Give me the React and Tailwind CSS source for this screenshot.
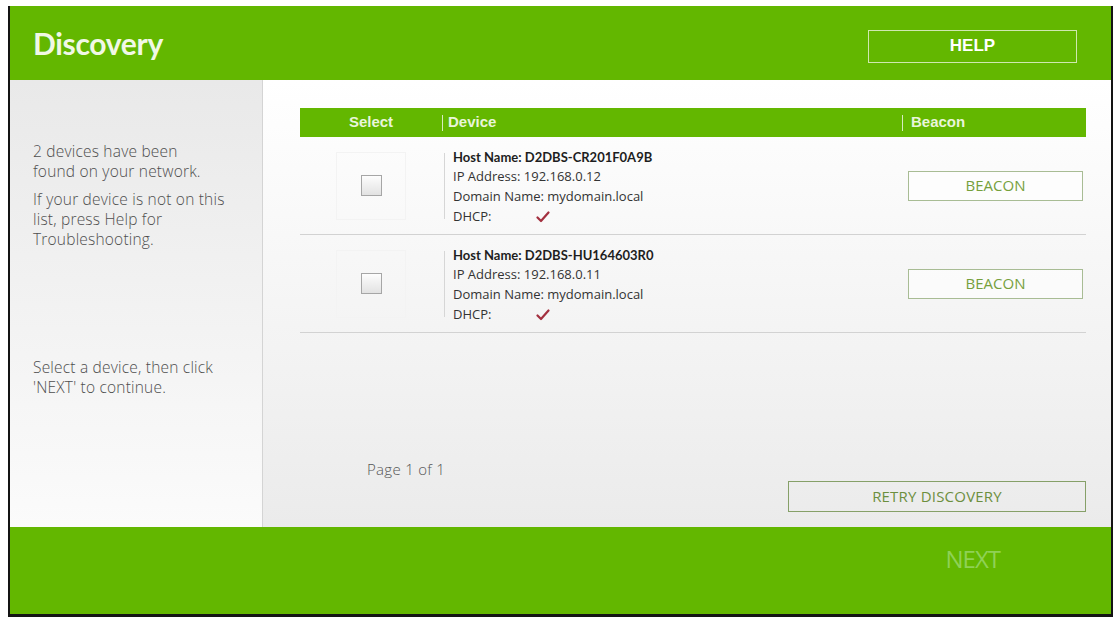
import React from 'react';

const devices = [
  { host: 'D2DBS-CR201F0A9B', ip: '192.168.0.12', domain: 'mydomain.local', dhcp: true },
  { host: 'D2DBS-HU164603R0', ip: '192.168.0.11', domain: 'mydomain.local', dhcp: true },
];

const Check = () => (
  <svg width="14" height="12" viewBox="0 0 14 12" className="inline-block">
    <path d="M1.5 6.5 L5 10 L12.5 1.5" fill="none" stroke="#a3303f" strokeWidth="2.2" strokeLinecap="round" strokeLinejoin="round" />
  </svg>
);

const DeviceRow = ({ device }) => (
  <div className="flex h-[98px] items-center border-b border-[#d2d2d2]">
    <div className="w-[142px] flex justify-center">
      <div className="w-[70px] h-[68px] border border-[#f3f3f3] flex items-center justify-center">
        <div className="w-[21px] h-[21px] border border-[#a6a6a6] bg-gradient-to-b from-[#fdfdfd] to-[#e2e2e2]"></div>
      </div>
    </div>
    <div className="w-[460px] flex items-center">
      <div className="w-px h-[66px] bg-[#d6d6d6] ml-[2px] mr-[8px]"></div>
      <div className="text-[13px] leading-[19.7px] text-[#333] pt-[3px]" style={{ fontFamily: '"Open Sans", sans-serif' }}>
        <p className="font-bold text-[#1e1e1e]" style={{ fontFamily: 'Lato, sans-serif' }}>Host Name: {device.host}</p>
        <p>IP Address: {device.ip}</p>
        <p>Domain Name: {device.domain}</p>
        <p className="flex items-center">
          <span className="w-[83px]">DHCP:</span>
          {device.dhcp && <Check />}
        </p>
      </div>
    </div>
    <div className="flex-1">
      <button className="ml-[6px] w-[175px] h-[30px] border border-[#a8bc94] bg-white/60 text-[15px] text-[#76a03c]">
        BEACON
      </button>
    </div>
  </div>
);

const App = () => {
  return (
    <div className="w-[1115px] h-[623px] bg-white pt-[6px] pl-[8px]" style={{ fontFamily: '"Open Sans", Lato, sans-serif' }}>
      <div className="w-[1105px] h-[611px] flex flex-col border-l-2 border-r-2 border-b-[3px] border-[#141414]">
        {/* header */}
        <div className="h-[74px] bg-[#63b700] flex items-center justify-between pl-[23px] pr-[34px]">
          <h1 className="text-[30px] font-bold text-[#f1f8e6] tracking-[-0.3px] pt-[1px]" style={{ fontFamily: 'Lato, sans-serif' }}>
            Discovery
          </h1>
          <button
            className="mt-[6px] w-[209px] h-[33px] border border-[#cfe8b0] text-[17px] font-bold text-white"
            style={{ fontFamily: '"Liberation Sans", Arial, sans-serif' }}
          >
            HELP
          </button>
        </div>

        {/* body */}
        <div className="flex-1 flex min-h-0">
          <div className="w-[253px] border-r border-[#d4d4d4] bg-gradient-to-b from-[#e9e9e9] to-[#fbfbfb] pl-[23px] pt-[61px] text-[15.5px] leading-[20px] font-light text-[#4e4e4e] tracking-[0.2px]">
            <p>2 devices have been<br />found on your network.</p>
            <p className="mt-[8px]">If your device is not on this<br />list, press Help for<br />Troubleshooting.</p>
            <p className="mt-[108px]">Select a device, then click<br />'NEXT' to continue.</p>
          </div>

          <div className="flex-1 flex flex-col bg-gradient-to-b from-white to-[#ebebeb] pl-[37px] pr-[25px] pt-[28px] pb-[15px]">
            <div
              className="h-[29px] bg-[#63b700] flex items-center text-[15px] font-bold text-[#e9f5da]"
              style={{ fontFamily: '"Liberation Sans", Arial, sans-serif' }}
            >
              <div className="w-[142px] text-center">Select</div>
              <div className="w-[460px] flex items-center">
                <span className="w-px h-[16px] bg-[#d6ecbf] mr-[5px]"></span>
                Device
              </div>
              <div className="flex-1 flex items-center">
                <span className="w-px h-[16px] bg-[#d6ecbf] mr-[8px]"></span>
                Beacon
              </div>
            </div>

            {devices.map((d) => (
              <DeviceRow key={d.host} device={d} />
            ))}

            <div className="flex-1"></div>

            <div className="flex justify-between items-start">
              <p className="pl-[67px] text-[15px] leading-[20px] font-light text-[#555] tracking-[0.3px]">Page 1 of 1</p>
              <button className="mt-[22px] w-[298px] h-[31px] border border-[#86a068] text-[15px] text-[#6c8f3e] tracking-[0.2px]">
                RETRY DISCOVERY
              </button>
            </div>
          </div>
        </div>

        {/* footer */}
        <div className="h-[87px] bg-[#63b700] flex items-center justify-end pr-[111px]">
          <span className="text-[24px] text-[#8fd156] tracking-[-1px] pb-[24px]">NEXT</span>
        </div>
      </div>
    </div>
  );
};

export default App;
